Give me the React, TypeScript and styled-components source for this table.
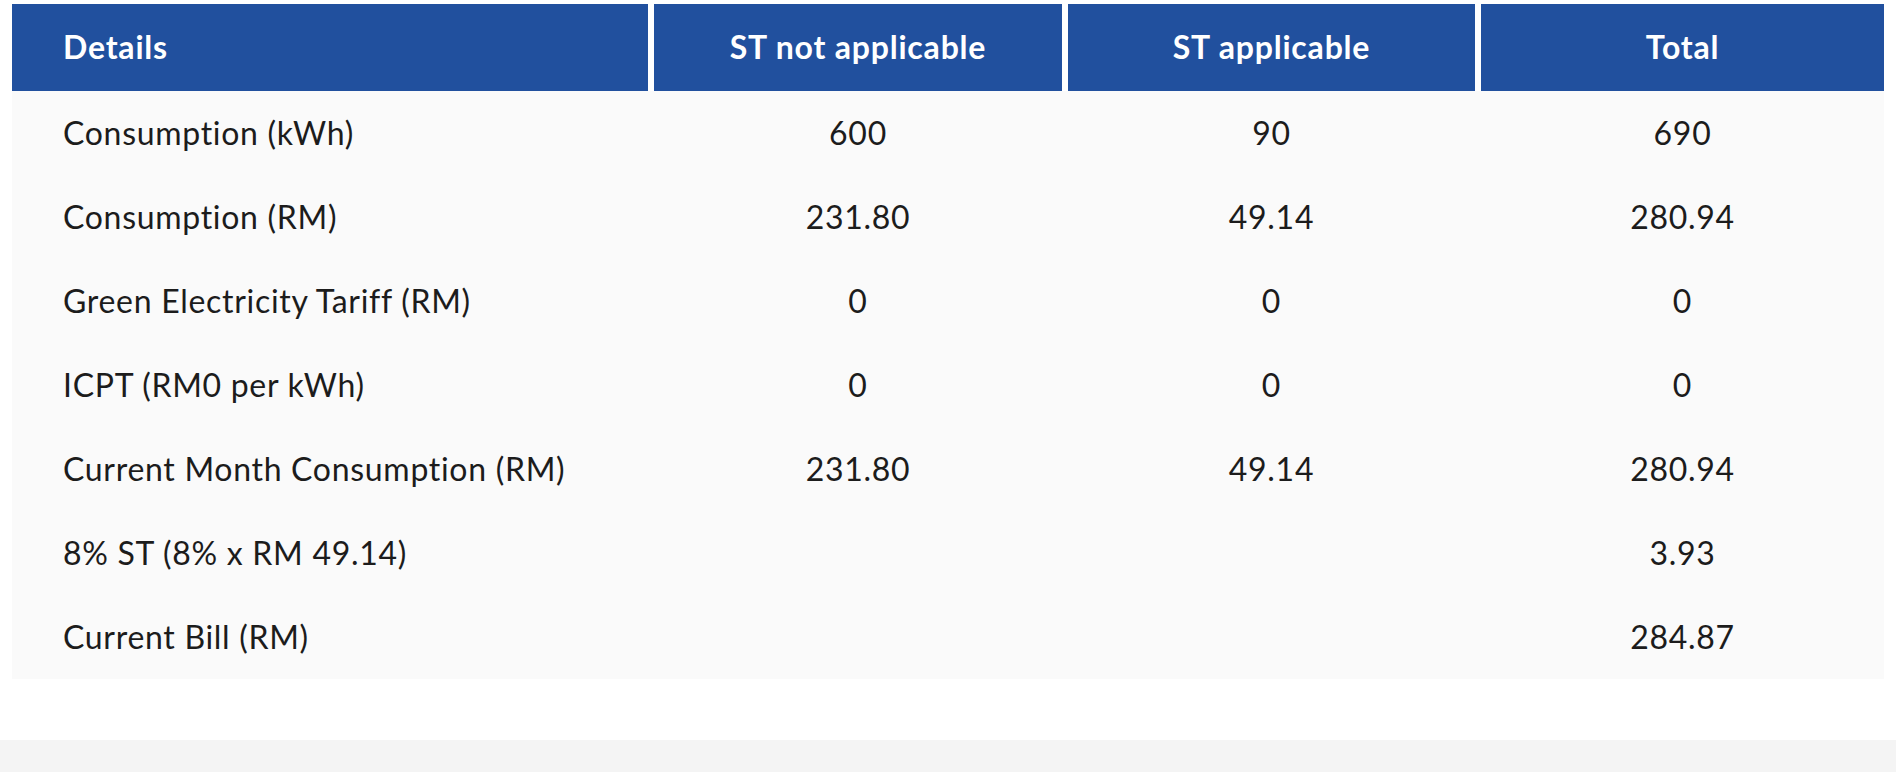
import styled, { createGlobalStyle } from 'styled-components'

const GlobalStyle = createGlobalStyle`
  body {
    margin: 0;
    background: #fff;
    font-family: Lato, "Open Sans", Arial, sans-serif;
  }
`

const Page = styled.div`
  display: flex;
  flex-direction: column;
  min-height: 772px;
`

const TableWrap = styled.div`
  padding: 4px 12px 0;
`

const cols = '636fr 408fr 407fr 403fr'

const HeaderRow = styled.div`
  display: grid;
  grid-template-columns: ${cols};
  column-gap: 6px;
  background: #fff;
`

const HeaderCell = styled.div<{ $align?: string }>`
  background: #21509e;
  color: #fff;
  height: 87px;
  padding-bottom: 3px;
  box-sizing: border-box;
  display: flex;
  align-items: center;
  justify-content: ${p => (p.$align === 'left' ? 'flex-start' : 'center')};
  padding-left: ${p => (p.$align === 'left' ? '51px' : '0')};
  font-size: 32px;
  font-weight: 700;
  letter-spacing: 0.8px;
`

const Body = styled.div`
  background: #fafafa;
`

const Row = styled.div`
  display: grid;
  grid-template-columns: ${cols};
  column-gap: 6px;
  height: 84px;
  align-items: center;
`

const Cell = styled.div<{ $align?: string }>`
  color: #1c1c1c;
  font-size: 32px;
  letter-spacing: 0.7px;
  padding-bottom: 2px;
  text-align: ${p => p.$align ?? 'center'};
  padding-left: ${p => (p.$align === 'left' ? '51px' : '0')};
`

const Footer = styled.div`
  margin-top: 61px;
  flex: 1;
  background: #f4f4f4;
`

const rows: [string, string, string, string][] = [
  ['Consumption (kWh)', '600', '90', '690'],
  ['Consumption (RM)', '231.80', '49.14', '280.94'],
  ['Green Electricity Tariff (RM)', '0', '0', '0'],
  ['ICPT (RM0 per kWh)', '0', '0', '0'],
  ['Current Month Consumption (RM)', '231.80', '49.14', '280.94'],
  ['8% ST (8% x RM 49.14)', '', '', '3.93'],
  ['Current Bill (RM)', '', '', '284.87'],
]

export default function App() {
  return (
    <Page>
      <GlobalStyle />
      <TableWrap>
        <HeaderRow>
          <HeaderCell $align="left">Details</HeaderCell>
          <HeaderCell>ST not applicable</HeaderCell>
          <HeaderCell>ST applicable</HeaderCell>
          <HeaderCell>Total</HeaderCell>
        </HeaderRow>
        <Body>
          {rows.map(r => (
            <Row key={r[0]}>
              <Cell $align="left">{r[0]}</Cell>
              <Cell>{r[1]}</Cell>
              <Cell>{r[2]}</Cell>
              <Cell>{r[3]}</Cell>
            </Row>
          ))}
        </Body>
      </TableWrap>
      <Footer />
    </Page>
  )
}
